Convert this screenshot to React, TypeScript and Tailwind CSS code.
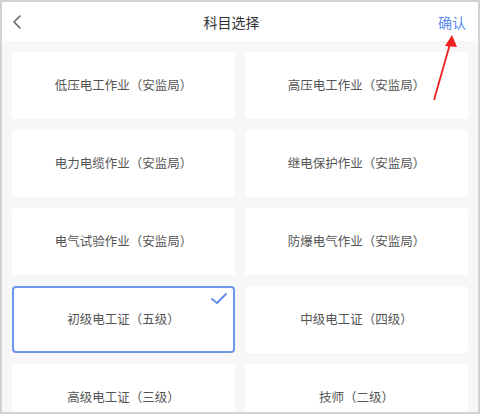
import React from "react";

const items = [
  "低压电工作业（安监局）",
  "高压电工作业（安监局）",
  "电力电缆作业（安监局）",
  "继电保护作业（安监局）",
  "电气试验作业（安监局）",
  "防爆电气作业（安监局）",
  "初级电工证（五级）",
  "中级电工证（四级）",
  "高级电工证（三级）",
  "技师（二级）",
];

export default function App() {
  const font = { fontFamily: '"Noto Sans CJK SC", "Noto Sans", sans-serif' };
  return (
    <div
      className="relative w-[480px] h-[414px] overflow-hidden border-2 border-[#d2d2d2] bg-[#f7f7f7] flex flex-col"
      style={font}
    >
      <div className="h-[39px] shrink-0 bg-white flex items-center justify-between pl-[9px] pr-[12px]">
        <svg width="14" height="16" viewBox="0 0 14 16">
          <path d="M9 2 L3 8 L9 14" fill="none" stroke="#666" strokeWidth="1.6" strokeLinecap="round" strokeLinejoin="round" />
        </svg>
        <div className="text-[14px] text-[#333] leading-none">科目选择</div>
        <div className="text-[14px] text-[#5b8df2] leading-none">确认</div>
      </div>
      <div className="grid grid-cols-2 gap-x-[10px] gap-y-[11px] px-[10px] pt-[11px]">
        {items.map((t, i) => {
          const sel = i === 6;
          return (
            <div
              key={t}
              className={
                sel
                  ? "relative h-[67px] bg-white rounded-[4px] border-2 border-[#6f97ee] flex items-center justify-center text-[12.5px] text-[#555]"
                  : "relative h-[67px] bg-white rounded-[4px] flex items-center justify-center text-[12.5px] text-[#555]"
              }
            >
              {t}
              {sel && (
                <svg className="absolute right-[5px] top-[4px]" width="18" height="14" viewBox="0 0 18 14">
                  <path d="M2 7 L7 11 L16 2" fill="none" stroke="#5b8df2" strokeWidth="1.8" strokeLinecap="round" strokeLinejoin="round" />
                </svg>
              )}
            </div>
          );
        })}
      </div>
      <svg className="absolute left-0 top-0 pointer-events-none" width="480" height="414">
        <line x1="432" y1="98" x2="448" y2="42" stroke="#f02020" strokeWidth="1.8" />
        <polygon points="450,33 443,44 455,45" fill="#f02020" />
      </svg>
    </div>
  );
}
